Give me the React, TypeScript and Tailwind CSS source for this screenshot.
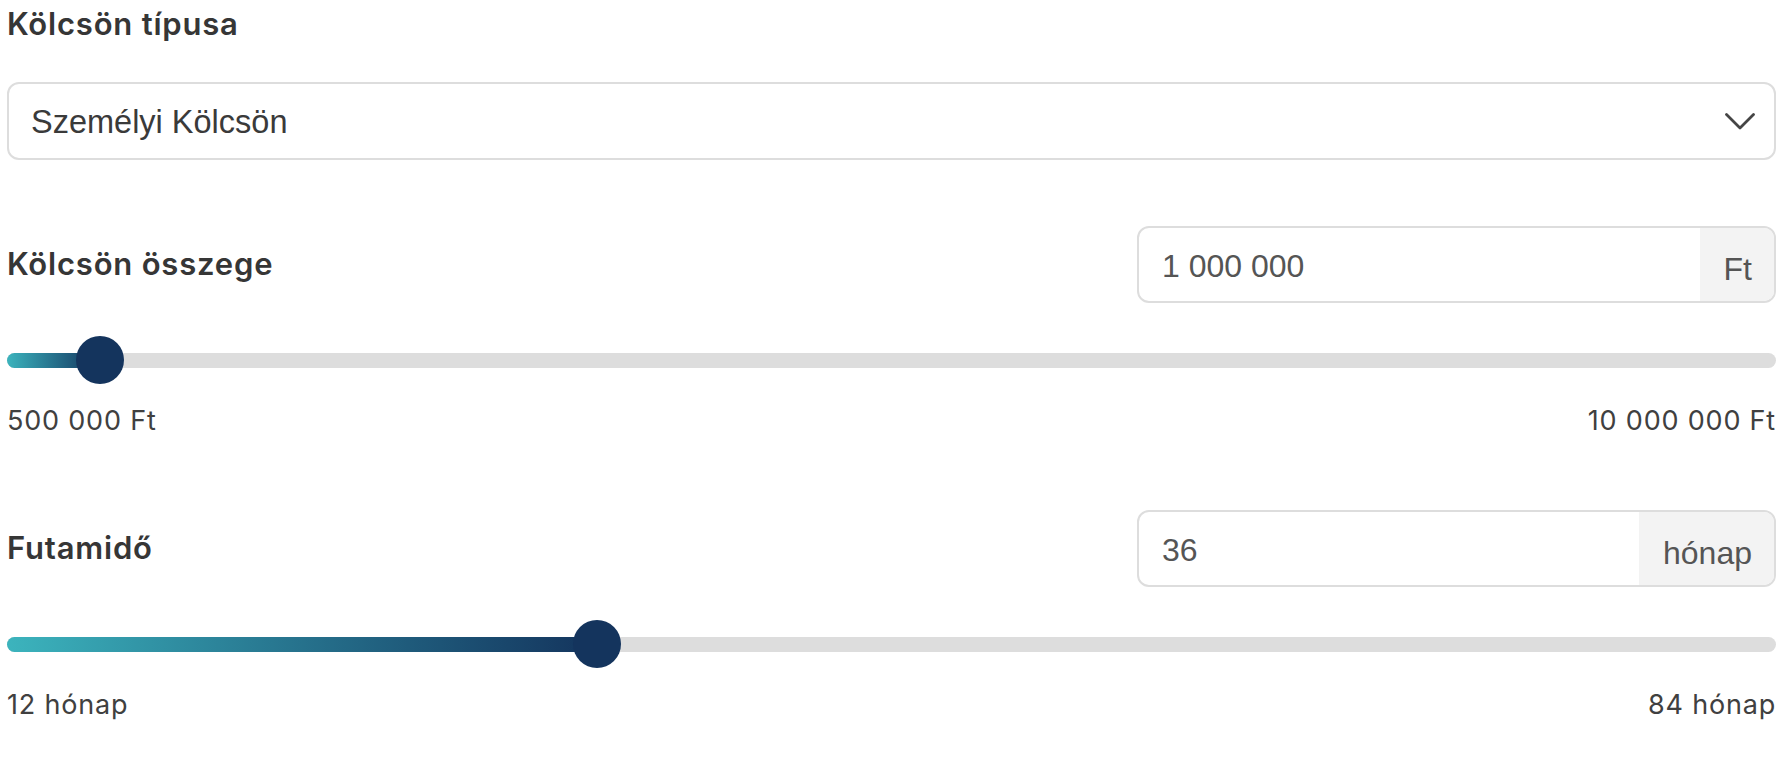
import { useState } from "react";

const label = "font-['Inter','Noto_Sans',sans-serif] text-[#363636]";
const field = "font-['Liberation_Sans',Arial,sans-serif]";

function Chevron() {
  return (
    <svg width="30" height="18" viewBox="0 0 30 18" fill="none" aria-hidden className="mt-[2px]">
      <polyline
        points="1.5,1.5 15,15 28.5,1.5"
        stroke="#454545"
        strokeWidth="2.8"
        strokeLinecap="round"
        strokeLinejoin="round"
      />
    </svg>
  );
}

function NumberField({ value, unit }: { value: string; unit: string }) {
  return (
    <div className="flex h-[77px] w-[639px] overflow-hidden rounded-[12px] border-2 border-[#dddddd] bg-white">
      <div className={`${field} flex flex-1 items-center pl-[23px] pt-[2px] text-[32px] text-[#555555]`}>
        {value}
      </div>
      <div
        className={`${field} flex items-center bg-[#f3f3f3] pl-[24px] pr-[22px] pt-[9px] text-[32px] text-[#555555]`}
      >
        {unit}
      </div>
    </div>
  );
}

// Thumb center sits at the raw fraction of the full track width.
function Slider({ fraction }: { fraction: number }) {
  const pct = `${fraction * 100}%`;
  return (
    <div className="relative h-[48px]">
      <div className="absolute inset-x-0 top-[17px] h-[15px] rounded-full bg-[#dddddd]" />
      <div
        className="absolute left-0 top-[17px] h-[15px] rounded-full bg-gradient-to-r from-[#3cb4bd] to-[#14345d]"
        style={{ width: pct }}
      />
      <div
        className="absolute top-0 h-[48px] w-[48px] -translate-x-1/2 rounded-full bg-[#14345d]"
        style={{ left: pct }}
      />
    </div>
  );
}

function RangeLabels({ min, max }: { min: string; max: string }) {
  return (
    <div
      className={`${label} mt-[22px] flex justify-between text-[27px] leading-[30px] tracking-[0.8px] text-[#404040]`}
    >
      <span>{min}</span>
      <span>{max}</span>
    </div>
  );
}

export default function App() {
  const [amount] = useState(1000000);
  const [months] = useState(36);

  return (
    <div className="min-h-screen bg-white pl-[7px] pr-[12px]">
      <h1 className={`${label} pt-[6px] text-[31px] font-semibold leading-[36px] tracking-[0.8px]`}>
        Kölcsön típusa
      </h1>

      <div className="mt-[40px] flex h-[78px] items-center justify-between rounded-[12px] border-2 border-[#dddddd] bg-white pl-[22px] pr-[19px]">
        <span className={`${field} pt-[3px] text-[32.5px] text-[#3a3a3a]`}>Személyi Kölcsön</span>
        <Chevron />
      </div>

      <div className="mt-[66px] flex items-center justify-between">
        <span className={`${label} text-[31px] font-semibold tracking-[0.8px]`}>Kölcsön összege</span>
        <NumberField value="1 000 000" unit="Ft" />
      </div>
      <div className="mt-[33px]">
        <Slider fraction={(amount - 500000) / 9500000} />
      </div>
      <RangeLabels min="500 000 Ft" max="10 000 000 Ft" />

      <div className="mt-[74px] flex items-center justify-between">
        <span className={`${label} text-[31px] font-semibold tracking-[0.8px]`}>Futamidő</span>
        <NumberField value={String(months)} unit="hónap" />
      </div>
      <div className="mt-[33px]">
        <Slider fraction={(months - 12) / 72} />
      </div>
      <RangeLabels min="12 hónap" max="84 hónap" />
    </div>
  );
}
